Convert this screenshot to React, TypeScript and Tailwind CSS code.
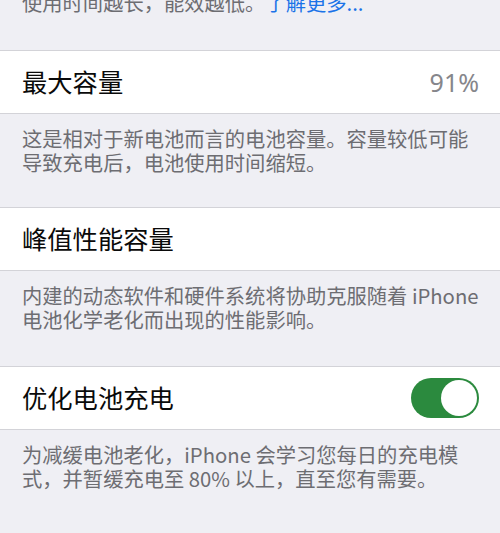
import React from "react";

const font = { fontFamily: '"Noto Sans CJK SC", "Noto Sans", sans-serif' };

function Desc({ lines, className = "" }: { lines: React.ReactNode[]; className?: string }) {
  return (
    <div className={`px-[22px] text-[20.3px] leading-[24px] text-[#6d6d72] ${className}`}>
      {lines.map((l, i) => (
        <div key={i} className="whitespace-nowrap">
          {l}
        </div>
      ))}
    </div>
  );
}

function Row({ title, right }: { title: string; right?: React.ReactNode }) {
  return (
    <div className="flex h-[64px] items-center justify-between border-y border-[#d3d3d8] bg-white pl-[22px] pr-[21px]">
      <span className="text-[25.3px] leading-none text-[#0a0a0a]">{title}</span>
      {right}
    </div>
  );
}

function Toggle() {
  return (
    <div className="flex h-[40px] w-[68px] items-center justify-end rounded-full bg-[#2b8a3e] p-[2px]">
      <div className="h-[36px] w-[36px] rounded-full bg-white" />
    </div>
  );
}

export default function App() {
  return (
    <div className="h-[533px] w-[500px] overflow-hidden bg-[#efeff4]" style={font}>
      <Desc
        className="-mt-[10px] pb-[36px]"
        lines={[
          <>
            使用时间越长，能效越低。<span className="text-[#1a73e8]">了解更多...</span>
          </>,
        ]}
      />
      <Row
        title="最大容量"
        right={
          <span className="text-[25px] leading-none text-[#86868b]" style={{ fontFamily: '"Noto Sans", Inter, sans-serif' }}>
            91%
          </span>
        }
      />
      <Desc
        className="pt-[12px] pb-[33px]"
        lines={["这是相对于新电池而言的电池容量。容量较低可能", "导致充电后，电池使用时间缩短。"]}
      />
      <Row title="峰值性能容量" />
      <Desc
        className="pt-[12px] pb-[35px]"
        lines={["内建的动态软件和硬件系统将协助克服随着 iPhone", "电池化学老化而出现的性能影响。"]}
      />
      <Row title="优化电池充电" right={<Toggle />} />
      <Desc
        className="pt-[12px]"
        lines={["为减缓电池老化，iPhone 会学习您每日的充电模", "式，并暂缓充电至 80% 以上，直至您有需要。"]}
      />
    </div>
  );
}
